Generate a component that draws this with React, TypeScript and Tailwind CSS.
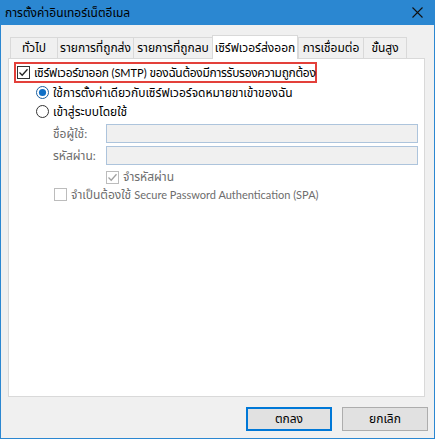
import React from "react";

const FONT = "font-['Lato','Tahoma','Leelawadee_UI','Noto_Sans_Thai','Noto_Sans',sans-serif]";

const tabs = [
  { label: "ทั่วไป", w: "w-[47px]" },
  { label: "รายการที่ถูกส่ง", w: "w-[76px]" },
  { label: "รายการที่ถูกลบ", w: "w-[79px]" },
  { label: "เซิร์ฟเวอร์ส่งออก", w: "w-[86px]", active: true },
  { label: "การเชื่อมต่อ", w: "w-[65px]" },
  { label: "ขั้นสูง", w: "w-[44px]" },
];

function Check({ checked, disabled }: { checked?: boolean; disabled?: boolean }) {
  const c = disabled ? "#bcbcbc" : "#333333";
  return (
    <svg width="13" height="13" viewBox="0 0 13 13" className="shrink-0">
      <rect x="0.5" y="0.5" width="12" height="12" fill="#ffffff" stroke={c} />
      {checked && (
        <path d="M2.5 6.5 L5.2 9.2 L10.5 3.2" fill="none" stroke={disabled ? "#a0a0a0" : "#222222"} strokeWidth="1.3" />
      )}
    </svg>
  );
}

function Radio({ checked }: { checked?: boolean }) {
  return (
    <svg width="13" height="13" viewBox="0 0 13 13" className="shrink-0">
      <circle cx="6.5" cy="6.5" r="6" fill="#ffffff" stroke={checked ? "#1a5f9e" : "#333333"} />
      {checked && <circle cx="6.5" cy="6.5" r="3.6" fill="#0e6fc7" />}
    </svg>
  );
}

export default function App() {
  return (
    <div className={`w-[435px] h-[439px] bg-[#f0f0f0] border-x border-b border-[#2b87d1] flex flex-col text-[12px] text-black ${FONT}`}>
      {/* title bar */}
      <div className="h-[25px] bg-[#2b87d1] flex items-center justify-between pl-[4px] pr-[11px] shrink-0">
        <span className="text-[12px] leading-none">การตั้งค่าอินเทอร์เน็ตอีเมล</span>
        <svg width="11" height="11" viewBox="0 0 11 11">
          <path d="M0.5 0.5 L10.5 10.5 M10.5 0.5 L0.5 10.5" stroke="#111" strokeWidth="1.1" />
        </svg>
      </div>

      {/* tabs */}
      <div className="flex items-end h-[33px] pl-[9px] shrink-0">
        {tabs.map((t) =>
          t.active ? (
            <div
              key={t.label}
              className={`${t.w} h-[24px] bg-white border-x border-t border-[#d9d9d9] -mb-px relative z-10 flex items-center justify-center whitespace-nowrap`}
            >
              {t.label}
            </div>
          ) : (
            <div
              key={t.label}
              className={`${t.w} h-[21px] bg-[#f0f0f0] border-t border-l last:border-r border-[#d9d9d9] flex items-center justify-center whitespace-nowrap`}
            >
              {t.label}
            </div>
          )
        )}
      </div>

      {/* panel */}
      <div className="ml-[7px] w-[417px] h-[339px] bg-white border border-[#d9d9d9] shrink-0 pt-[3px] pl-[5px] whitespace-nowrap">
        <div className="w-[303px] h-[21px] border-2 border-[#e3403a] flex items-center pl-[1px] gap-[4px]">
          <Check checked />
          <span className="tracking-[-0.3px]">
            เซิร์ฟเวอร์ขาออก <span className="text-[11px] tracking-normal">(SMTP)</span> ของฉันต้องมีการรับรองความถูกต้อง
          </span>
        </div>

        <div className="ml-[22px] flex flex-col">
          <div className="h-[19px] flex items-center gap-[4px]">
            <Radio checked />
            <span>ใช้การตั้งค่าเดียวกับเซิร์ฟเวอร์จดหมายขาเข้าของฉัน</span>
          </div>
          <div className="h-[19px] flex items-center gap-[4px]">
            <Radio />
            <span>เข้าสู่ระบบโดยใช้</span>
          </div>
        </div>

        <div className="ml-[39px] mt-[3px] flex flex-col gap-[3px] text-[#6d6d6d]">
          <div className="flex items-center">
            <span className="w-[53px]">ชื่อผู้ใช้:</span>
            <div className="w-[312px] h-[19px] bg-[#f0f0f0] border border-[#adc4dc]" />
          </div>
          <div className="flex items-center">
            <span className="w-[53px]">รหัสผ่าน:</span>
            <div className="w-[312px] h-[19px] bg-[#f0f0f0] border border-[#adc4dc]" />
          </div>
          <div className="ml-[53px] h-[18px] flex items-center gap-[4px]">
            <Check checked disabled />
            <span>จำรหัสผ่าน</span>
          </div>
        </div>

        <div className="ml-[40px] h-[17px] flex items-center gap-[4px] text-[#6d6d6d]">
          <Check disabled />
          <span>
            จำเป็นต้องใช้ <span className="text-[11px]">Secure Password Authentication (SPA)</span>
          </span>
        </div>
      </div>

      {/* buttons */}
      <div className="flex justify-end gap-[10px] pr-[6px] mt-[10px]">
        <button className="w-[86px] h-[24px] bg-[#e1e1e1] border-2 border-[#0078d7]">ตกลง</button>
        <button className="w-[86px] h-[24px] bg-[#e1e1e1] border border-[#adadad]">ยกเลิก</button>
      </div>
    </div>
  );
}
